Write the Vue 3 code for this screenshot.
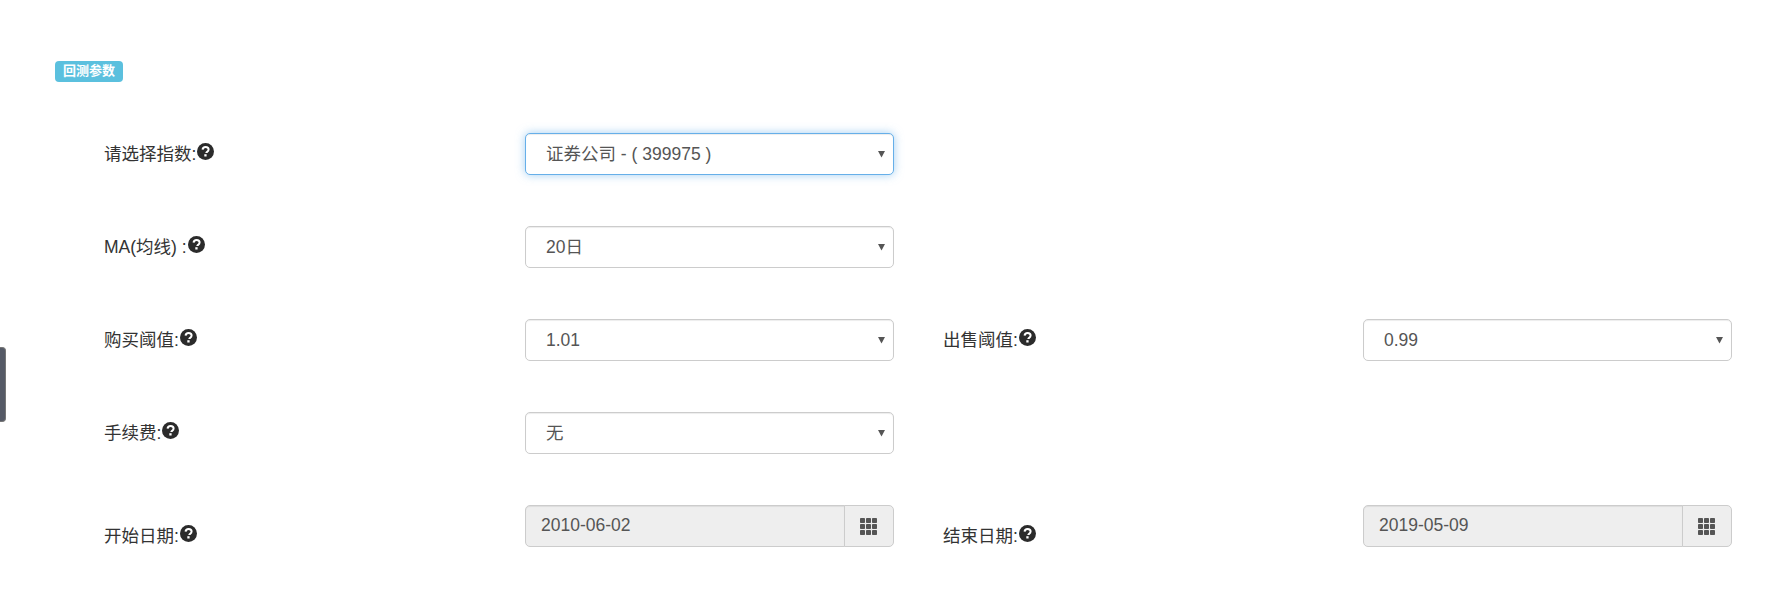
<script setup>
const rows = [
  { id: 'r1', cells: [{ label: '请选择指数:', value: '证券公司 - ( 399975 )', focus: true }] },
  { id: 'r2', cells: [{ label: 'MA(均线) :', value: '20日' }] },
  { id: 'r3', cells: [{ label: '购买阈值:', value: '1.01' }, { label: '出售阈值:', value: '0.99' }] },
  { id: 'r4', cells: [{ label: '手续费:', value: '无' }] },
  { id: 'r5', cells: [{ label: '开始日期:', value: '2010-06-02', date: true }, { label: '结束日期:', value: '2019-05-09', date: true }] },
]
</script>

<template>
  <div class="page">
    <div class="handle"></div>
    <span class="badge">回测参数</span>
    <form class="form">
      <div v-for="row in rows" :key="row.id" class="row">
        <div v-for="cell in row.cells" :key="cell.label" class="cell">
          <label class="label" :class="{ low: cell.date }">
            <span class="label-text">{{ cell.label }}</span><svg class="help" viewBox="0 0 17 17" aria-hidden="true">
              <circle cx="8.5" cy="8.5" r="8.5" fill="#2b2b2b" />
              <path d="M5.6 6.6c.1-1.7 1.3-2.6 3-2.6 1.7 0 3 1 3 2.5 0 1.2-.7 1.8-1.5 2.3-.6.4-.8.6-.8 1.2" fill="none" stroke="#fff" stroke-width="2" />
              <rect x="7.3" y="11.2" width="2.3" height="2.3" fill="#fff" />
            </svg>
          </label>
          <div v-if="cell.date" class="date">
            <input class="date-input" :value="cell.value" readonly />
            <span class="addon">
              <svg class="grid-icon" viewBox="0 0 17 17" aria-hidden="true">
                <g fill="#555">
                  <rect x="0" y="0" width="5" height="5" rx=".8" /><rect x="6" y="0" width="5" height="5" rx=".8" /><rect x="12" y="0" width="5" height="5" rx=".8" />
                  <rect x="0" y="6" width="5" height="5" rx=".8" /><rect x="6" y="6" width="5" height="5" rx=".8" /><rect x="12" y="6" width="5" height="5" rx=".8" />
                  <rect x="0" y="12" width="5" height="5" rx=".8" /><rect x="6" y="12" width="5" height="5" rx=".8" /><rect x="12" y="12" width="5" height="5" rx=".8" />
                </g>
              </svg>
            </span>
          </div>
          <div v-else class="select-wrap">
            <select class="select" :class="{ focus: cell.focus }">
              <option>{{ cell.value }}</option>
            </select>
            <svg class="caret" viewBox="0 0 8 8" aria-hidden="true"><path d="M0 1h7L3.5 7.5z" fill="#555" /></svg>
          </div>
        </div>
      </div>
    </form>
  </div>
</template>

<style>
html, body { margin: 0; background: #fff; }
</style>

<style scoped>
.page {
  position: relative;
  height: 603px;
  overflow: hidden;
  box-sizing: border-box;
  padding: 61px 0 0 55px;
  font-family: "Liberation Sans", "Noto Sans CJK SC", sans-serif;
  font-size: 17.5px;
  color: #333;
}
.handle {
  position: absolute;
  left: 0;
  top: 347px;
  width: 6px;
  height: 75px;
  box-sizing: border-box;
  background: #555a66;
  border: 1px solid #777;
  border-left: 0;
  border-radius: 0 4px 4px 0;
}
.badge {
  display: block;
  width: 68px;
  height: 21px;
  box-sizing: border-box;
  background: #5bc0de;
  border-radius: 4px;
  color: #fff;
  font-size: 13px;
  font-weight: 700;
  line-height: 20px;
  text-align: center;
}
.form { padding: 51px 0 0 49px; }
.row { display: flex; height: 42px; margin-bottom: 51px; }
.cell { display: flex; width: 840px; }
.cell + .cell { width: 787px; }
.label {
  display: flex;
  align-items: center;
  width: 421px;
  height: 42px;
  flex: none;
  white-space: pre;
}
.cell + .cell .label { width: 420px; margin-left: -1px; }
.label-text { margin-top: -3px; }
.label.low { padding-top: 19px; box-sizing: border-box; }
.help { width: 17px; height: 17px; margin: -5px 0 0 1px; }
.select-wrap, .date { position: relative; width: 369px; height: 42px; flex: none; }
.select {
  appearance: none;
  display: block;
  width: 100%;
  height: 100%;
  box-sizing: border-box;
  padding: 0 26px 0 20px;
  background: #fff;
  border: 1px solid #ccc;
  border-radius: 5px;
  box-shadow: inset 0 1px 1px rgba(0, 0, 0, .075);
  font: inherit;
  color: #555;
  outline: none;
}
.select.focus {
  border-color: #66afe9;
  box-shadow: inset 0 1px 1px rgba(0, 0, 0, .075), 0 0 10px rgba(102, 175, 233, .6);
}
.caret { position: absolute; right: 8px; top: 17px; width: 8px; height: 8px; }
.date { display: flex; }
.date-input {
  flex: 1;
  min-width: 0;
  box-sizing: border-box;
  padding: 0 15px 1px;
  background: #eee;
  border: 1px solid #ccc;
  border-radius: 5px 0 0 5px;
  box-shadow: inset 0 1px 1px rgba(0, 0, 0, .075);
  font: inherit;
  color: #555;
  outline: none;
}
.addon {
  display: flex;
  align-items: center;
  justify-content: center;
  width: 50px;
  flex: none;
  box-sizing: border-box;
  background: #eee;
  border: 1px solid #ccc;
  margin-left: -1px;
  border-radius: 0 5px 5px 0;
}
.grid-icon { width: 17px; height: 17px; margin-right: 2px; }
</style>
